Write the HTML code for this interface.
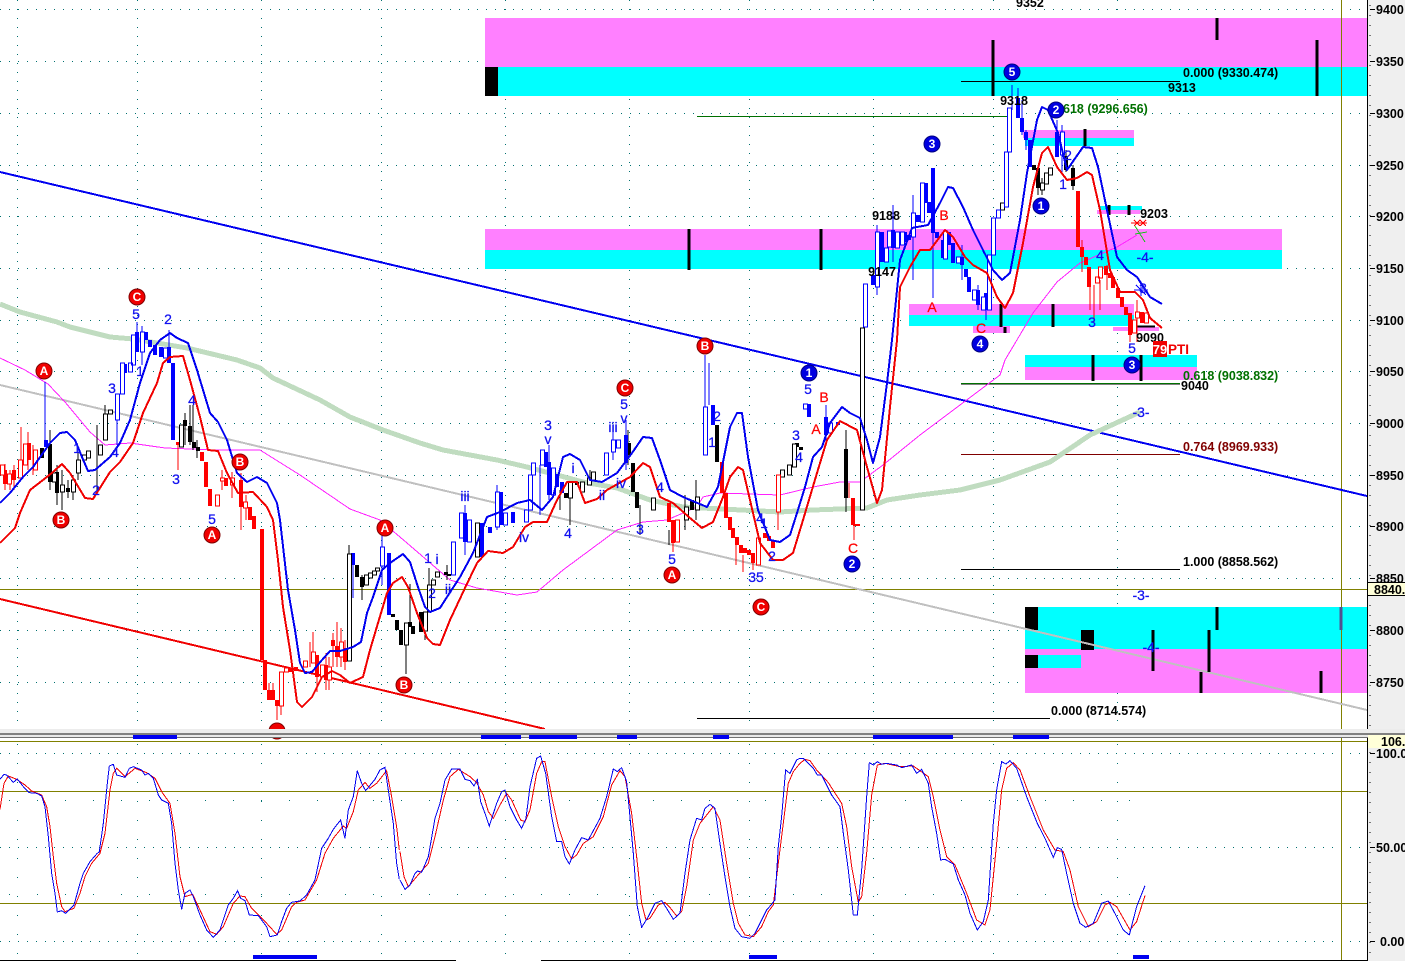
<!DOCTYPE html>
<html><head><meta charset="utf-8"><title>Chart</title>
<style>
html,body{margin:0;padding:0;background:#fff;width:1405px;height:961px;overflow:hidden}
svg{display:block;font-family:"Liberation Sans",sans-serif}
.f{font-weight:bold;font-size:12.5px}
.b{fill:#1010f0;stroke:#1010f0;stroke-width:.25px;font-size:14px;text-anchor:middle}
.r{fill:#f00;stroke:#f00;stroke-width:.25px;font-size:14px;text-anchor:middle}
.k{fill:#000;font-weight:bold;font-size:12.5px;text-anchor:middle}
.ax{fill:#000;font-weight:bold;font-size:12.5px}
.c{fill:#fff;font-weight:bold;font-size:12px;text-anchor:middle}
</style></head><body>
<svg width="1405" height="961" viewBox="0 0 1405 961" xmlns="http://www.w3.org/2000/svg" shape-rendering="crispEdges">
<rect width="1405" height="961" fill="#fff"/>
<!-- grid -->
<g fill="none" stroke="#007070" stroke-width="1">
<path stroke-dasharray="1 8" d="M0 9.5H1367M0 61.5H1367M0 113.5H1367M0 165.5H1367M0 216.5H1367M0 268.5H1367M0 320.5H1367M0 371.5H1367M0 423.5H1367M0 475.5H1367M0 526.5H1367M0 578.5H1367M0 630.5H1367M0 682.5H1367M0 753.5H1367M0 847.5H1367M0 941.5H1367"/>
<path stroke-dasharray="1 8" d="M17.5 0V729M137.5 0V729M261.5 0V729M381.5 0V729M505.5 0V729M629.5 0V729M749.5 0V729M873.5 0V729M993.5 0V729M1117.5 0V729"/>
<path stroke-dasharray="1 18" d="M17.5 744V961M137.5 744V961M261.5 744V961M381.5 744V961M505.5 744V961M629.5 744V961M749.5 744V961M873.5 744V961M993.5 744V961M1117.5 744V961"/>
<path stroke-dasharray="1 27" d="M9 800.5H1130M9 894.5H1130"/>
</g>
<!-- zones -->
<g>
<rect x="485" y="18" width="882" height="49" fill="#ff80ff"/><rect x="485" y="67" width="882" height="29" fill="#00ffff"/><rect x="485" y="67" width="13" height="29" fill="#000"/>
<rect x="485" y="229" width="797" height="21" fill="#ff80ff"/><rect x="485" y="250" width="797" height="19" fill="#00ffff"/>
<rect x="909" y="304" width="225" height="11" fill="#ff80ff"/><rect x="909" y="315" width="225" height="11" fill="#00ffff"/>
<rect x="973" y="326" width="37" height="7" fill="#ff80ff"/><rect x="1113" y="327" width="46" height="4" fill="#ff80ff"/>
<rect x="1023" y="130" width="111" height="8" fill="#ff80ff"/><rect x="1025" y="138" width="109" height="8" fill="#00ffff"/>
<rect x="1100" y="206" width="42" height="4" fill="#00ffff"/><rect x="1097" y="210" width="43" height="4" fill="#ff80ff"/>
<rect x="1025" y="355" width="172" height="12" fill="#00ffff"/><rect x="1025" y="367" width="172" height="13" fill="#ff80ff"/>
<rect x="1025" y="607" width="342" height="42" fill="#00ffff"/><rect x="1025" y="649" width="342" height="44" fill="#ff80ff"/>
<rect x="1038" y="655" width="43" height="13" fill="#00ffff"/>
<rect x="1025" y="607" width="13" height="23" fill="#000"/><rect x="1081" y="630" width="13" height="20" fill="#000"/><rect x="1025" y="655" width="13" height="13" fill="#000"/>
</g>
<!-- ref lines -->
<g fill="none" stroke="#808000" stroke-width="1">
<path d="M0 589.5H1367M0 741.5H1367M1341.5 0V961M0 791.5H1367M0 903.5H1367"/>
</g>
<!-- fib lines -->
<path d="M961 81.5H1180M961 384H1180M961 569.5H1180M697 718.5H1050" stroke="#000" fill="none"/>
<path d="M697 116.5H1010M961 383.5H1180" stroke="#007000" fill="none"/>
<path d="M961 454.5H1180" stroke="#800000" fill="none"/>
<!-- channels -->
<g fill="none">
<path d="M0 385L1367 710" stroke="#c0c0c0" stroke-width="2"/>
<path d="M0 172L1367 496" stroke="#0000f0" stroke-width="2"/>
<path d="M0 599L545 729" stroke="#f00000" stroke-width="2"/>
<path d="M0 304L20 312L57 322L70 327L110 337L133 339L187 348L237 360L260 368L273 378L320 400L350 417L383 430L420 443L443 450L497 460L527 467L557 475L583 482L617 488L650 500L683 507L780 512L813 510L867 508L887 500L920 495L960 490L1000 480L1050 462L1090 435L1140 412" stroke="#c0dcc0" stroke-width="5"/>
<path d="M0 358L25 370L48 384L65 402L90 432L105 445L130 443L165 448L215 450L260 450L300 475L350 509L380 520L407 543L450 580L477 588L517 595L537 592L563 570L617 530L643 522L667 520L697 507L703 497L720 493L780 495L813 487L840 482L860 482L883 465L920 435L960 405L1000 375L1005 360L1033 313L1057 282L1080 263L1117 247L1137 235" stroke="#ff20ff" stroke-width="1"/>
</g>
<!-- black ticks -->
<path d="M993 40V96M1217 18V40M1317 40V96M689 229V270M821 229V270M1001 304V327M1053 304V327M1005 327V333M1085 129V146M1109 205V215M1129 205V215M1093 355V381M1141 355V381M1153 630V671M1209 630V672M1217 607V630M1201 672V693M1321 671V693" stroke="#000" stroke-width="3" fill="none"/>
<path d="M1341 607V630" stroke="#505090" stroke-width="3" fill="none"/>
<path d="M1134 326.5H1155" stroke="#000" stroke-width="2" fill="none"/>
<!-- wicks -->
<path fill="none" stroke="#000" stroke-width="1" d="M50 430V490M57 465V505M62 470V510M68 480V498M73 475V500M78 452V480M97 425V490M105 405V440M185 413V445M190 405V445M193 405V450M197 440V458M406 645V674M410 584V622M425 631V640M429 568V585M362 575V600M669 530V545M570 495V525M640 505V535M685 495V530M696 480V520M846 430V512M1038 165V195M1042 178V195M1066 150V172M1073 165V190M349 545V610M447 565V580M560 490V510M590 470V485M628 430V465"/>
<path fill="none" stroke="#00f" stroke-width="1" d="M45 382V440M117 420V445M137 322V335M142 326V365M169 330V350M709 363V405M705 355V407M826 405V445M1012 85V110M933 233V298M877 225V295M893 205V262M913 195V280M962 245V280M978 285V310M986 305V320M1022 100V135M1026 130V150M1057 120V132M1062 125V175M465 505V555M497 485V530M549 445V500M540 465V515M613 425V460M626 420V470M382 535V585M1018 88V100M353 565V598"/>
<path fill="none" stroke="#f00" stroke-width="1" d="M5 464V490M10 470V490M14 465V490M21 427V480M28 432V470M33 445V475M178 445V470M222 470V490M232 472V498M241 473V530M246 495V520M854 525V540M849 483V498M778 512V530M753 563V570M1082 240V272M1090 285V310M1094 285V322M1100 280V310M1107 265V290M1130 335V342M1137 300V342M673 543V552M743 555V572M736 545V565M277 706V720M281 706V715M269 683V692M273 683V690M313 632V652M317 677V692M326 653V690M329 657V690M333 633V667M337 622V667M341 628V667M345 640V670M310 642V667"/>
<!-- filled bodies -->
<path fill="none" stroke="#000" stroke-width="4" d="M42 448V458M50 444V482M57 472V493M68 488V492M185 420V426M190 426V442M194 442V448M198 447V451M357 565V577M362 577V587M393 614V617M397 620V630M401 630V645M410 622V627M413 626V634M421 612V632M446 572V575M449 574V576M566 493V498M577 482V485M629 443V455M633 463V492M637 492V508M717 425V462M797 443V447M801 447V450M692 500V510M846 449V498M1034 165V170M1038 168V188M1066 156V170M1073 168V186M1134 325V332"/>
<path fill="none" stroke="#00f" stroke-width="4" d="M46 440V447M125 364V373M137 332V352M146 332V340M150 340V347M155 345V355M161 347V357M169 347V363M173 363V440M353 553V565M389 553V615M465 513V542M482 523V557M490 527V533M501 492V525M513 512V523M546 452V467M549 462V495M557 474V487M562 482V493M626 435V463M713 405V425M809 404V417M826 417V435M838 422V425M873 275V285M882 232V262M893 230V248M905 232V242M909 235V240M918 215V222M926 183V203M929 202V213M933 168V233M937 232V238M943 240V258M949 232V245M953 243V263M962 257V265M966 269V277M969 277V292M978 290V305M986 293V310M1018 98V118M1022 118V132M1026 132V140M1030 140V167M1057 132V157"/>
<path fill="none" stroke="#f00" stroke-width="4" d="M5 470V484M14 470V480M29 443V460M178 442V445M202 452V461M206 462V487M210 489V506M226 478V486M241 480V507M250 507V520M254 516V529M262 529V660M265 660V690M269 690V700M273 690V700M277 700V706M291 668V672M296 667V671M317 655V677M326 665V680M333 640V646M337 646V657M345 648V662M669 503V522M673 520V543M722 462V493M726 493V518M730 517V530M733 528V538M737 537V545M741 545V553M745 548V553M749 550V555M753 553V563M765 533V538M769 536V541M773 540V548M853 498V525M1078 191V247M1082 247V257M1086 257V265M1089 267V287M1106 266V275M1110 273V278M1113 277V288M1118 288V298M1122 297V307M1126 307V315M1130 313V335M1142 312V323"/>
<path d="M853 525H860" stroke="#f00" stroke-width="2" fill="none"/>
<!-- hollow bodies -->
<path fill="#fff" stroke="#000" stroke-width="1" d="M52.5 473h4V482h-4zM60.5 485h4V492h-4zM71.5 480h4V492h-4zM76.5 460h4V473h-4zM82.5 455h4V460h-4zM86.5 451h4V458h-4zM98.5 445h4V455h-4zM103.5 414h4V440h-4zM108.5 410h4V414h-4zM179.5 425h4V447h-4zM347.5 554h4V661h-4zM364.5 575h4V585h-4zM368.5 573h4V578h-4zM372.5 571h4V575h-4zM375.5 568h4V571h-4zM404.5 623h4V645h-4zM423.5 612h4V631h-4zM427.5 585h4V612h-4zM431.5 580h4V585h-4zM435.5 572h4V577h-4zM475.5 523h4V557h-4zM568.5 482h4V498h-4zM580.5 482h4V492h-4zM587.5 478h4V485h-4zM591.5 472h4V480h-4zM651.5 498h4V510h-4zM684.5 507h4V520h-4zM695.5 497h4V510h-4zM780.5 470h4V477h-4zM787.5 465h4V475h-4zM792.5 444h4V467h-4zM860.5 328h4V510h-4zM1000.5 203h4V210h-4zM1040.5 183h4V190h-4zM1044.5 173h4V184h-4zM1048.5 168h4V175h-4z"/>
<path fill="#fff" stroke="#00f" stroke-width="1" d="M115.5 394h4V420h-4zM120.5 363h4V394h-4zM128.5 363h4V372h-4zM131.5 335h4V365h-4zM140.5 332h4V352h-4zM163.5 348h4V358h-4zM380.5 547h4V566h-4zM451.5 542h4V575h-4zM459.5 513h4V538h-4zM467.5 520h4V542h-4zM495.5 492h4V527h-4zM503.5 513h4V525h-4zM524.5 510h4V522h-4zM528.5 475h4V510h-4zM531.5 463h4V475h-4zM540.5 450h4V465h-4zM551.5 468h4V495h-4zM604.5 453h4V475h-4zM611.5 440h4V452h-4zM616.5 440h4V448h-4zM703.5 407h4V455h-4zM803.5 404h4V409h-4zM828.5 423h4V433h-4zM863.5 284h4V327h-4zM875.5 232h4V287h-4zM884.5 248h4V262h-4zM887.5 231h4V247h-4zM895.5 232h4V248h-4zM900.5 232h4V245h-4zM911.5 213h4V237h-4zM920.5 183h4V222h-4zM943.5 231h4V259h-4zM956.5 257h4V263h-4zM972.5 290h4V300h-4zM981.5 297h4V310h-4zM987.5 255h4V310h-4zM991.5 218h4V255h-4zM996.5 210h4V218h-4zM1004.5 152h4V207h-4zM1007.5 108h4V152h-4zM1060.5 132h4V155h-4z"/>
<path fill="#fff" stroke="#f00" stroke-width="1" d="M.5 465h4V475h-4zM7.5 474h4V484h-4zM18.5 460h4V478h-4zM23.5 444h4V465h-4zM33.5 450h4V470h-4zM215.5 495h4V506h-4zM220.5 478h4V481h-4zM230.5 478h4V485h-4zM243.5 502h4V508h-4zM279.5 672h4V706h-4zM284.5 668h4V672h-4zM303.5 661h4V667h-4zM311.5 652h4V663h-4zM320.5 665h4V677h-4zM327.5 667h4V680h-4zM339.5 642h4V657h-4zM675.5 520h4V542h-4zM756.5 538h4V565h-4zM776.5 475h4V512h-4zM1095.5 277h4V283h-4zM1098.5 267h4V278h-4zM1132.5 320h4V333h-4zM1135.5 312h4V318h-4zM1144.5 313h4V323h-4z"/>
<!-- envelopes -->
<g fill="none" stroke-linejoin="round">
<path stroke="#0000f0" stroke-width="2" d="M0 503L10 493L23 477L33 467L43 453L50 443L60 433L67 432L75 440L82 457L88 471L95 470L110 457L120 443L130 420L140 383L150 353L160 340L170 333L177 338L188 343L197 370L210 413L218 422L227 440L237 473L247 482L257 477L267 483L277 503L280 520L288 590L295 630L300 663L305 673L312 672L322 660L330 651L340 651L353 647L361 642L367 613L373 597L382 570L390 563L403 554L410 562L418 587L425 607L430 612L440 608L447 597L460 577L473 553L487 517L500 512L517 503L530 500L542 510L553 497L563 457L570 454L580 460L590 480L602 482L617 473L632 453L643 437L652 438L660 460L670 490L683 497L707 507L718 487L730 427L737 413L742 413L748 457L758 510L770 540L780 542L790 535L797 513L805 487L813 457L822 447L830 423L842 407L850 413L860 418L867 440L873 463L880 437L887 383L892 340L900 260L912 228L928 225L940 203L948 187L953 188L963 207L973 230L983 250L993 270L1002 280L1010 273L1020 220L1027 173L1037 120L1042 107L1048 110L1058 133L1067 170L1083 147L1092 148L1098 167L1107 210L1117 257L1127 270L1137 277L1150 297L1162 304"/>
<path stroke="#f00000" stroke-width="2" d="M0 543L15 528L20 513L30 490L43 480L53 472L62 464L70 473L85 498L93 499L110 472L120 462L133 443L143 413L157 383L163 363L170 357L183 356L190 380L200 417L208 450L218 451L227 473L238 493L253 492L267 507L273 520L278 560L283 607L290 650L297 702L302 707L312 697L322 677L332 671L340 675L350 683L363 677L370 650L378 623L387 593L393 583L402 577L408 587L417 613L427 638L433 644L440 645L450 620L465 588L477 563L488 551L503 553L513 547L525 527L533 522L547 522L557 500L567 482L577 482L585 503L597 499L607 490L630 477L643 463L650 467L660 497L673 503L690 518L702 528L713 522L723 497L730 477L738 467L743 470L750 500L760 543L773 560L783 560L793 553L803 520L817 473L827 440L840 421L857 430L867 467L877 503L882 490L890 407L897 340L900 287L910 267L920 250L930 250L945 230L953 237L965 257L973 265L987 273L997 297L1005 308L1013 293L1023 243L1033 187L1042 153L1048 147L1057 167L1067 180L1077 178L1087 172L1092 175L1100 210L1110 270L1120 292L1135 292L1143 300L1150 318L1162 328"/>
</g>
<!-- crosses -->
<path d="M1131 223h16M1134 220l6 6M1140 220l6 6M1134 226l6-6M1140 226l6-6" stroke="#f00" fill="none"/>
<path d="M1135 226l10 16M1147 232l-12 2" stroke="#20c020" fill="none"/>
<path d="M1134 290h14M1141 284v12M1136 285l10 10" stroke="#00f" fill="none"/>
<!-- price labels -->
<g class="f">
<text x="1183" y="77">0.000 (9330.474)</text>
<text x="1168" y="92">9313</text>
<text x="1063" y="113" fill="#007000">618 (9296.656)</text>
<text x="1183" y="380" fill="#007000">0.618 (9038.832)</text>
<text x="1181" y="390">9040</text>
<text x="1183" y="451" fill="#800000">0.764 (8969.933)</text>
<text x="1183" y="566">1.000 (8858.562)</text>
<text x="1051" y="715">0.000 (8714.574)</text>
<text x="1016" y="7">9352</text>
</g>
<g class="k">
<text x="886" y="220">9188</text><text x="882" y="276">9147</text><text x="1014" y="105">9318</text><text x="1154" y="218">9203</text><text x="1150" y="342">9090</text>
</g>
<!-- wave labels blue -->
<g class="b">
<text x="136" y="319">5</text><text x="168" y="324">2</text><text x="140" y="376">1</text><text x="112" y="393">3</text><text x="115" y="457">4</text><text x="96" y="495">2</text><text x="77" y="453">1</text><text x="176" y="484">3</text><text x="192" y="405">4</text><text x="212" y="524">5</text>
<text x="465" y="501">iii</text><text x="524" y="542">iv</text><text x="548" y="430">3</text><text x="548" y="444">v</text><text x="568" y="538">4</text><text x="573" y="473">i</text><text x="613" y="432">iii</text><text x="624" y="409">5</text><text x="624" y="423">v</text><text x="602" y="500">ii</text><text x="621" y="488">iv</text><text x="660" y="492">4</text><text x="640" y="534">3</text><text x="672" y="564">5</text><text x="428" y="563">1</text><text x="437" y="564">i</text><text x="432" y="598">2</text><text x="448" y="594">ii</text>
<text x="717" y="421">2</text><text x="712" y="447">1</text><text x="808" y="394">5</text><text x="796" y="440">3</text><text x="799" y="462">4</text><text x="760" y="523">4</text><text x="764" y="528">1</text><text x="772" y="561">2</text><text x="756" y="582">35</text>
<text x="1092" y="327">3</text><text x="1100" y="260">4</text><text x="1132" y="353">5</text><text x="1063" y="189">1</text><text x="1068" y="160">2</text><text x="1143" y="293">3</text>
<text x="1145" y="262">-4-</text><text x="1141" y="417">-3-</text><text x="1141" y="600">-3-</text><text x="1151" y="652">-4-</text>
</g>
<g class="r">
<text x="824" y="402">B</text><text x="816" y="434">A</text><text x="853" y="553">C</text><text x="932" y="312">A</text><text x="944" y="220">B</text><text x="981" y="333">C</text>
</g>
<!-- circles red -->
<g fill="#f00000" stroke="#800000" stroke-width="1" shape-rendering="auto">
<circle cx="137" cy="297" r="8"/><circle cx="44" cy="371" r="8"/><circle cx="61" cy="520" r="8"/><circle cx="212" cy="535" r="8"/><circle cx="240" cy="462" r="8"/><circle cx="385" cy="528" r="8"/><circle cx="404" cy="685" r="8"/><circle cx="277" cy="731" r="8"/><circle cx="705" cy="346" r="8"/><circle cx="625" cy="388" r="8"/><circle cx="672" cy="575" r="8"/><circle cx="761" cy="607" r="8"/>
</g>
<g class="c">
<text x="137" y="301">C</text><text x="44" y="375">A</text><text x="61" y="524">B</text><text x="212" y="539">A</text><text x="240" y="466">B</text><text x="385" y="532">A</text><text x="404" y="689">B</text><text x="705" y="350">B</text><text x="625" y="392">C</text><text x="672" y="579">A</text><text x="761" y="611">C</text>
</g>
<!-- circles blue -->
<g fill="#0000e0" stroke="#000080" stroke-width="1" shape-rendering="auto">
<circle cx="809" cy="373" r="8"/><circle cx="852" cy="564" r="8"/><circle cx="932" cy="144" r="8"/><circle cx="980" cy="344" r="8"/><circle cx="1012" cy="72" r="8"/><circle cx="1041" cy="206" r="8"/><circle cx="1056" cy="110" r="8"/><circle cx="1132" cy="365" r="8"/>
</g>
<g class="c">
<text x="809" y="377">1</text><text x="852" y="568">2</text><text x="932" y="148">3</text><text x="980" y="348">4</text><text x="1012" y="76">5</text><text x="1041" y="210">1</text><text x="1056" y="114">2</text><text x="1132" y="369">3</text>
</g>
<!-- PTI -->
<rect x="1153" y="341" width="14" height="16" fill="#f00000"/>
<text x="1160" y="354" fill="#fff" font-weight="bold" font-size="13" text-anchor="middle">79</text>
<text x="1168" y="354" fill="#f00000" font-weight="bold" font-size="13.5">PTI</text>
<!-- lower panel -->
<g fill="none" stroke-width="1">
<g stroke="#f00000">
<path transform="translate(0 740) scale(.3333)" vector-effect="non-scaling-stroke" d="M0 208L12 130L25 108L50 118L75 135L95 153L125 165L140 200L150 260L160 350L170 430L185 500L195 515L222 505L240 460L255 410L275 370L300 340L315 280L330 150L340 100L350 85L375 110L405 85L440 98L465 115L485 155L510 190L525 280L540 410L555 470L578 463L600 510L630 575L650 583L670 560L700 490L720 468L735 470L755 505L780 530L800 550L830 583L845 570L875 500L890 487L915 480L950 420L975 340L1000 295L1030 258L1040 265L1060 215L1075 150L1095 127L1110 145L1130 130L1160 92L1175 170L1190 260L1198 330"/>
<path transform="translate(400 740) scale(.3333)" vector-effect="non-scaling-stroke" d="M0 335L12 410L25 440L50 410L85 370L105 290L130 180L150 110L175 88L210 110L230 128L250 165L265 215L280 235L300 195L320 160L335 180L362 240L375 245L390 210L410 100L425 65L435 65L455 170L475 260L495 320L515 357L530 345L550 310L580 290L610 230L635 135L660 92L675 110L695 220L710 350L725 490L738 540L750 535L775 495L795 487L812 505L830 528L845 515L860 440L880 300L900 250L940 200L960 240L980 370L1000 490L1015 550L1035 585L1060 590L1085 560L1105 515L1120 495L1135 370L1150 250L1165 130L1180 95L1200 70"/>
<path transform="translate(800 740) scale(.3333)" vector-effect="non-scaling-stroke" d="M0 70L15 58L30 62L50 90L85 128L125 190L140 260L155 380L175 487L185 470L200 340L215 165L232 75L255 70L300 80L340 78L385 110L400 170L420 270L440 350L465 375L500 460L530 540L555 555L570 510L590 310L605 150L620 85L640 68L660 90L690 170L730 270L765 330L790 335L810 390L835 500L865 560L890 545L915 495L930 487L950 500L990 570L1010 545L1035 467"/>
</g>
<g stroke="#0000f0">
<path transform="translate(0 740) scale(.3333)" vector-effect="non-scaling-stroke" d="M0 118L12 103L20 105L40 127L52 117L70 140L88 158L110 160L125 168L135 200L145 290L155 400L165 460L172 516L185 512L197 520L222 495L240 430L250 400L270 365L290 342L298 335L310 250L322 130L328 78L340 73L350 105L375 112L388 85L400 80L425 90L435 105L445 100L460 115L475 165L485 180L505 190L515 250L525 370L535 450L545 508L555 460L570 450L580 470L600 525L620 570L640 592L660 570L685 495L700 475L713 452L722 475L735 482L748 525L775 527L800 560L810 590L832 585L845 545L860 505L875 487L900 483L920 465L945 420L965 325L985 295L1000 268L1022 240L1035 295L1045 210L1060 170L1072 92L1085 130L1097 152L1125 118L1140 90L1155 82L1165 150L1180 250L1190 370L1198 418"/>
<path transform="translate(400 740) scale(.3333)" vector-effect="non-scaling-stroke" d="M0 420L15 448L30 435L45 400L52 393L65 397L85 350L105 235L120 190L135 120L155 87L180 87L195 118L210 122L222 138L232 118L242 185L255 220L268 258L290 190L305 155L315 150L330 200L350 240L365 265L378 235L390 140L410 55L422 48L437 100L455 230L470 305L485 305L495 350L508 372L525 330L545 293L565 300L600 235L620 170L640 87L652 95L665 83L680 125L690 230L700 340L712 500L725 562L745 530L765 490L785 482L800 505L820 538L840 520L855 400L870 300L890 235L905 240L915 205L930 193L945 205L960 310L975 410L990 500L1005 565L1025 590L1050 595L1065 580L1100 510L1115 493L1125 480L1135 320L1145 230L1157 90L1170 100L1190 60L1200 55"/>
<path transform="translate(800 740) scale(.3333)" vector-effect="non-scaling-stroke" d="M0 55L10 55L40 85L52 105L65 105L95 165L120 200L130 280L145 390L160 525L172 525L185 390L200 170L208 68L220 75L232 65L245 73L260 70L290 75L305 83L335 75L350 100L365 88L385 130L395 200L410 280L422 360L435 358L460 372L475 420L495 465L510 520L532 570L550 545L565 480L580 250L590 150L605 65L618 72L630 62L650 85L680 170L712 250L735 295L760 352L772 323L785 328L800 400L820 490L840 550L857 562L880 550L905 490L925 483L950 530L970 570L988 585L1010 500L1035 437"/>
</g>
</g>
<!-- separator -->
<rect x="0" y="729" width="1405" height="4" fill="#ececec"/>
<rect x="0" y="733" width="1405" height="2" fill="#808080"/>
<rect x="0" y="735" width="1405" height="2" fill="#e8e8e8"/>
<rect x="0" y="737" width="1405" height="1" fill="#707070"/>
<!-- bottom markers -->
<path d="M133 737H177M481 737H521M529 737H577M617 737H637M713 737H729M873 737H953M1013 737H1049M253 957H317M749 957H777M1133 957H1149" stroke="#0000f0" stroke-width="4" fill="none"/>
<path d="M0 960.5H456M541 960.5H1367" stroke="#000" fill="none"/>
<!-- axis -->
<rect x="1367" y="0" width="38" height="729" fill="#efefef"/>
<rect x="1367" y="738" width="38" height="223" fill="#efefef"/>
<path d="M1367.5 0V729M1367.5 738V961" stroke="#000" fill="none"/>
<path stroke="#000" fill="none" d="M1370 9.5h5M1370 61.5h5M1370 113.5h5M1370 165.5h5M1370 216.5h5M1370 268.5h5M1370 320.5h5M1370 371.5h5M1370 423.5h5M1370 475.5h5M1370 526.5h5M1370 578.5h5M1370 630.5h5M1370 682.5h5M1370 753.5h5M1370 847.5h5M1370 941.5h5"/>
<path stroke="#000" stroke-dasharray="1 9" fill="none" d="M1370 5V726M1370 742V961"/>
<g class="ax">
<text x="1376" y="14">9400</text><text x="1376" y="66">9350</text><text x="1376" y="118">9300</text><text x="1376" y="170">9250</text><text x="1376" y="221">9200</text><text x="1376" y="273">9150</text><text x="1376" y="325">9100</text><text x="1376" y="376">9050</text><text x="1376" y="428">9000</text><text x="1376" y="480">8950</text><text x="1376" y="531">8900</text><text x="1376" y="583">8850</text><text x="1376" y="635">8800</text><text x="1376" y="687">8750</text>
</g>
<rect x="1368" y="582" width="37" height="14" fill="#ffffd8"/><path d="M1367 582.5H1405M1367 595.5H1405" stroke="#000" fill="none"/>
<text class="ax" x="1374" y="594">8840.</text>
<rect x="1368" y="735" width="37" height="13" fill="#ffffd8"/>
<text class="ax" x="1381" y="746">106.</text>
<text class="ax" x="1376" y="758">100.0</text>
<text class="ax" x="1376" y="852">50.00</text>
<text class="ax" x="1380" y="946">0.00</text>
</svg>
</body></html>
